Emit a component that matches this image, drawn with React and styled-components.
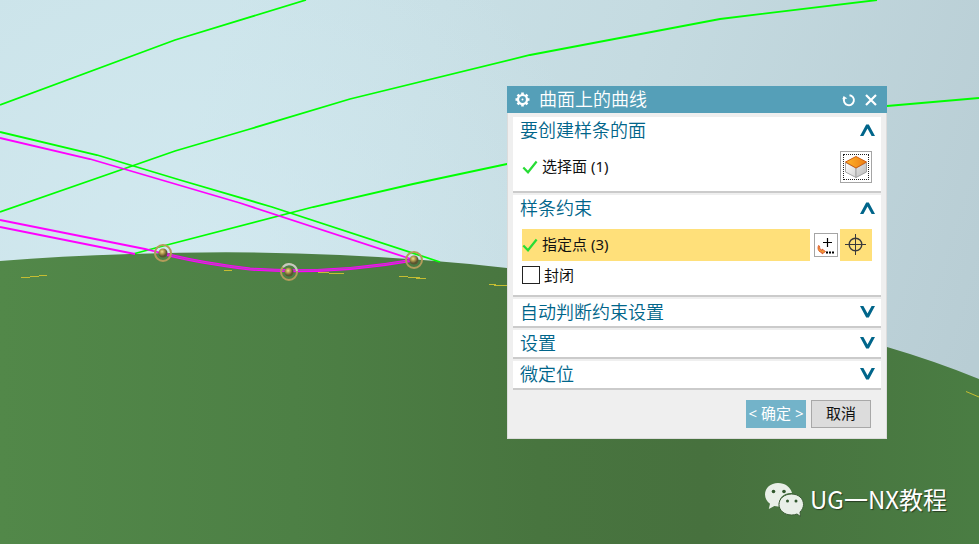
import React from "react";
import styled, { createGlobalStyle } from "styled-components";

const GlobalStyle = createGlobalStyle`
  * { box-sizing: border-box; }
  body {
    margin: 0;
    font-family: "Noto Sans", "Noto Sans CJK SC", sans-serif;
    font-size: 15px;
    color: #111;
  }
  button { font: inherit; color: inherit; padding: 0; margin: 0; cursor: pointer; }
`;

const Viewport = styled.main`
  position: relative;
  min-height: 100vh;
  overflow: hidden;
  background: #cbe3e9;
`;

const Scene = styled.svg`
  position: absolute;
  inset: 0;
  width: 100%;
  height: 100%;
  display: block;
`;

const Dialog = styled.section`
  position: absolute;
  top: 86px;
  right: 92px;
  width: 380px;
  background: #efefef;
`;

const TitleBar = styled.header`
  display: flex;
  align-items: center;
  gap: 9px;
  height: 27px;
  padding: 0 10px 0 8px;
  background: #559fb8;
  color: #fff;
`;

const Title = styled.h1`
  flex: 1;
  margin: 0;
  font-size: 18px;
  font-weight: 350;
  line-height: 26px;
  padding-bottom: 2px;
`;

const TitleButton = styled.button`
  display: flex;
  border: 0;
  background: none;
`;

const DialogBody = styled.div`
  display: flex;
  flex-direction: column;
  gap: 2px;
  padding: 4px 5px 10px;
  border: 1px solid #dcdcdc;
  border-top: 0;
`;

const Group = styled.section`
  background: #fff;
  border-bottom: 2px solid #cbcbcb;
`;

const GroupHeading = styled.h2`
  margin: 0;
  font-size: 18px;
  font-weight: 350;
`;

const GroupToggle = styled.button`
  display: flex;
  justify-content: space-between;
  align-items: center;
  width: 100%;
  height: 27px;
  padding: 0 6px 0 7px;
  border: 0;
  background: none;
  color: #00658a;
  line-height: 29px;
`;

const GroupBody = styled.div`
  padding: 7px 9px 8px;
`;

const Row = styled.div`
  display: flex;
  align-items: center;
  gap: 2px;
`;

const Selection = styled.div`
  display: flex;
  flex: 1;
  align-items: center;
  gap: 4px;
  height: 32px;
  margin-right: 2px;
  line-height: 30px;
  background: ${(p) => (p.$active ? "#ffe07a" : "transparent")};
`;

const SelectionText = styled.span`
  align-self: flex-start;
`;

const ToolButton = styled.button`
  display: grid;
  place-items: center;
  width: ${(p) => p.$size}px;
  height: ${(p) => p.$size}px;
  border: ${(p) => (p.$active ? "0" : "1px solid #a5a5a5")};
  background: ${(p) => (p.$active ? "#ffe07a" : "#fff")};
`;

const FocusFrame = styled.span`
  display: grid;
  place-items: center;
  width: 26px;
  height: 26px;
  border: 1px dotted #222;
`;

const CheckLabel = styled.label`
  display: flex;
  align-items: center;
  gap: 4px;
  height: 26px;
  padding-top: 2px;
  line-height: 20px;
`;

const CheckBox = styled.input`
  appearance: none;
  width: 18px;
  height: 18px;
  margin: 0;
  border: 1px solid #222;
  background: #fff;
`;

const Footer = styled.footer`
  display: flex;
  justify-content: flex-end;
  gap: 5px;
  padding: 8px 10px 0;
`;

const ActionButton = styled.button`
  width: 60px;
  height: 28px;
  white-space: nowrap;
  line-height: 24px;
  padding-bottom: 2px;
  border: ${(p) => (p.$primary ? "0" : "1px solid #a8a8a8")};
  background: ${(p) => (p.$primary ? "#73b3c9" : "#dcdcdc")};
  color: ${(p) => (p.$primary ? "#fff" : "#111")};
`;

const Watermark = styled.div`
  position: absolute;
  right: 32px;
  bottom: 27px;
  display: flex;
  align-items: center;
  gap: 6px;
  color: #fff;
  font-family: "Noto Sans CJK SC", sans-serif;
  font-size: 24px;
  line-height: 36px;
  text-shadow: 1px 1px 1px #263c22;
`;

const Gear = () => (
  <svg width="15" height="15" viewBox="0 0 15 15" fill="none" stroke="#fff" aria-hidden="true">
    <circle cx="7.5" cy="7.5" r="4.5" strokeWidth="2.2" />
    {[0, 45, 90, 135, 180, 225, 270, 315].map((a) => (
      <path key={a} d="M7.5 0.5V3" strokeWidth="2.6" transform={`rotate(${a} 7.5 7.5)`} />
    ))}
    <circle cx="7.5" cy="7.5" r="1" fill="#fff" stroke="none" />
  </svg>
);

const Reset = () => (
  <svg width="14" height="14" viewBox="0 0 14 14" fill="none" stroke="#fff" strokeWidth="1.9" aria-hidden="true">
    <path d="M7.5 2.2A5 5 0 1 1 2.4 5" />
    <path d="M0.3 6.2 1.6 3 5.4 5.6Z" fill="#fff" stroke="none" />
  </svg>
);

const Cross = () => (
  <svg width="12" height="12" viewBox="0 0 12 12" stroke="#fff" strokeWidth="2.2" aria-hidden="true">
    <path d="M1 1 11 11M11 1 1 11" />
  </svg>
);

const Chevron = ({ open }) => (
  <svg width="15" height="13" viewBox="0 0 15 13" fill="#00658a" aria-hidden="true">
    <path d={open ? "M0 12 6.2 0.5H8.8L15 12H11.6L7.5 4.5 3.4 12Z" : "M0 0 6.2 11.5H8.8L15 0H11.6L7.5 7.5 3.4 0Z"} />
  </svg>
);

const Tick = () => (
  <svg width="16" height="14" viewBox="0 0 16 14" fill="none" stroke="#27dc35" strokeWidth="2.2" aria-hidden="true">
    <path d="M1.3 7.5 6 12.3 14.6 1.5" />
  </svg>
);

const FaceCube = () => (
  <svg width="24" height="24" viewBox="0 0 24 24" aria-hidden="true">
    <defs>
      <linearGradient id="cubeTop" x2="1">
        <stop stopColor="#ffb52b" />
        <stop offset="1" stopColor="#ec7d14" />
      </linearGradient>
      <linearGradient id="cubeLeft" x2="1" y2="1">
        <stop stopColor="#fff" />
        <stop offset="1" stopColor="#d4d4d4" />
      </linearGradient>
      <linearGradient id="cubeRight" x2="1" y2="1">
        <stop stopColor="#e6e6e6" />
        <stop offset="1" stopColor="#b9b9b9" />
      </linearGradient>
    </defs>
    <path d="M1.5 7.500V17L12 22.500V13Z" fill="url(#cubeLeft)" stroke="#aaa" />
    <path d="M22.500 7.500V17L12 22.500V13Z" fill="url(#cubeRight)" stroke="#a0a0a0" />
    <path d="M12 1.500 22.500 7 12 13 1.500 7Z" fill="url(#cubeTop)" stroke="#cd5e12" />
  </svg>
);

const PointDialogIcon = () => (
  <svg width="20" height="20" viewBox="0 0 20 20" aria-hidden="true">
    <path d="M11.5 3V12M7 7.5H16" stroke="#000" strokeWidth="1.2" />
    <path d="M2.500 10.500C1 14 3 17.500 6 17.500V19L9.500 16.500 6 14V15.500C4.500 15 3.500 13.500 3.500 11Z" fill="#f29a36" stroke="#d64b22" strokeWidth="0.8" />
    <path d="M10 16.500H12V18.500H10ZM13 16.500H15V18.500H13ZM16 16.500H18V18.500H16Z" />
  </svg>
);

const Target = () => (
  <svg width="22" height="22" viewBox="0 0 22 22" fill="none" stroke="#39393c" aria-hidden="true">
    <circle cx="10.5" cy="10.5" r="6.3" strokeWidth="1.4" />
    <path d="M10.5 0V21M0 10.5H21" />
  </svg>
);

const ChatLogo = () => (
  <svg width="40" height="35" viewBox="0 0 40 35" fill="#e9efe8" aria-hidden="true">
    <path d="M14 1C6.500 1 1 6 1 12.500c0 4 2 7.200 5 9.200L4.800 27l5.600-3c1.400.4 3 .5 4.500.4C14 16 19.500 10.500 28 11 26.500 5 21 1 14 1Z" />
    <path d="M27.500 12C20.500 12 15 16.500 15 22.500S20.500 33 27.500 33c2 0 4-.3 5.500-1L36.500 34.500 36 30c2-2 3.500-4.500 3.500-7.500C39.500 16.500 34.500 12 27.500 12Z" stroke="#3b5b35" />
    <g fill="#31572d">
      <circle cx="9.500" cy="9.500" r="1.800" />
      <circle cx="20" cy="9.500" r="1.800" />
      <circle cx="23.500" cy="19" r="1.500" />
      <circle cx="32" cy="19" r="1.500" />
    </g>
  </svg>
);

const pins = [
  { x: 163, y: 253 },
  { x: 289, y: 272, lit: true },
  { x: 414, y: 260 },
];

const ModelView = () => (
  <Scene viewBox="0 0 979 544" preserveAspectRatio="xMidYMid slice" role="img" aria-label="曲面">
    <defs>
      <linearGradient id="sky" gradientUnits="userSpaceOnUse" x1="200" y1="100" x2="979" y2="340">
        <stop stopColor="#cbe3e9" />
        <stop offset="0.5" stopColor="#c5dbe1" />
        <stop offset="1" stopColor="#b8cdd4" />
      </linearGradient>
      <radialGradient id="skyGlow" gradientUnits="userSpaceOnUse" cx="200" cy="290" r="420">
        <stop offset="0" stopColor="#d4ebf2" stopOpacity="0.8" />
        <stop offset="1" stopColor="#d4ebf2" stopOpacity="0" />
      </radialGradient>
      <linearGradient id="hill">
        <stop stopColor="#528849" />
        <stop offset="0.3" stopColor="#4d8045" />
        <stop offset="0.55" stopColor="#48753f" />
        <stop offset="0.72" stopColor="#47713e" />
        <stop offset="1" stopColor="#4a7d43" />
      </linearGradient>
      <radialGradient id="ball" cx="0.4" cy="0.35">
        <stop stopColor="#f0dc91" />
        <stop offset="0.5" stopColor="#b3994c" />
        <stop offset="1" stopColor="#5c5530" />
      </radialGradient>
    </defs>
    <rect width="979" height="544" fill="url(#sky)" />
    <rect width="979" height="544" fill="url(#skyGlow)" />
    <path
      d="M0 261Q60 256 130 254Q240 250 340 255Q430 259 507 268Q720 288 887 347Q935 361 979 379V544H0Z"
      fill="url(#hill)"
    />
    <g fill="none" stroke="#0f0" strokeWidth="1.8">
      <path d="M0 105 175 40 306 0" />
      <path d="M0 212 132 166 175 151 250 129 350 99 530 55 720 19 877 0" />
      <path d="M0 132 97 155 180 180 272 207 440 262" />
      <path d="M133 254 163 246 313 207 413 184 507 164 700 129 887 106 979 98" />
    </g>
    <g fill="none" stroke="#f0f" strokeWidth="1.8">
      <path d="M0 138 90 159 240 203 414 260" />
      <path d="M0 220 145 249 165 254" />
      <path d="M0 227 135 254" />
      <path d="M165 254Q200 263 250 269Q330 275 414 260" strokeWidth="3" />
      <path d="M165 254Q200 263 250 269Q330 275 414 260" strokeWidth="1" stroke="#a84fa8" />
    </g>
    <g fill="none" stroke="#c5bd32" strokeWidth="1">
      <path d="M21 277.5H30M30 276.5H39M39 275.5H47" />
      <path d="M224 270.5H232M318 272.5H329M329 273.5H344" />
      <path d="M399 276.5H408M408 277.5H420M416 278.5H426" />
      <path d="M489 284.5H496M494 285.5H507M966 391.5 979 397" />
    </g>
    {pins.map(({ x, y, lit }) => (
      <g key={x}>
        <circle cx={x} cy={y} r="8" fill="none" stroke="#b39c5a" strokeWidth="2" />
        {lit ? (
          <path d={`M${x - 6} ${y - 5}A8 8 0 0 1 ${x + 8} ${y - 1}`} fill="none" stroke="#c5c9c1" strokeWidth="2" />
        ) : null}
        <circle cx={x} cy={y} r="4.5" fill="url(#ball)" />
      </g>
    ))}
  </Scene>
);

const Panel = ({ title, open = false, children }) => (
  <Group>
    <GroupHeading>
      <GroupToggle type="button" aria-expanded={open}>
        {title}
        <Chevron open={open} />
      </GroupToggle>
    </GroupHeading>
    {open ? <GroupBody>{children}</GroupBody> : null}
  </Group>
);

export default function App() {
  return (
    <>
      <GlobalStyle />
      <Viewport>
        <ModelView />
        <Dialog role="dialog" aria-labelledby="dialog-title">
          <TitleBar>
            <Gear />
            <Title id="dialog-title">曲面上的曲线</Title>
            <TitleButton type="button" aria-label="重置"><Reset /></TitleButton>
            <TitleButton type="button" aria-label="关闭"><Cross /></TitleButton>
          </TitleBar>
          <DialogBody>
            <Panel title="要创建样条的面" open>
              <Row>
                <Selection><Tick /><SelectionText>选择面 (1)</SelectionText></Selection>
                <ToolButton type="button" $size={32} aria-label="选择面">
                  <FocusFrame><FaceCube /></FocusFrame>
                </ToolButton>
              </Row>
            </Panel>
            <Panel title="样条约束" open>
              <Row>
                <Selection $active><Tick /><SelectionText>指定点 (3)</SelectionText></Selection>
                <ToolButton type="button" $size={24} aria-label="点对话框"><PointDialogIcon /></ToolButton>
                <ToolButton type="button" $size={32} $active aria-label="指定点"><Target /></ToolButton>
              </Row>
              <CheckLabel><CheckBox type="checkbox" />封闭</CheckLabel>
            </Panel>
            <Panel title="自动判断约束设置" />
            <Panel title="设置" />
            <Panel title="微定位" />
            <Footer>
              <ActionButton type="button" $primary>&lt; 确定 &gt;</ActionButton>
              <ActionButton type="button">取消</ActionButton>
            </Footer>
          </DialogBody>
        </Dialog>
        <Watermark><ChatLogo />UG一NX教程</Watermark>
      </Viewport>
    </>
  );
}
